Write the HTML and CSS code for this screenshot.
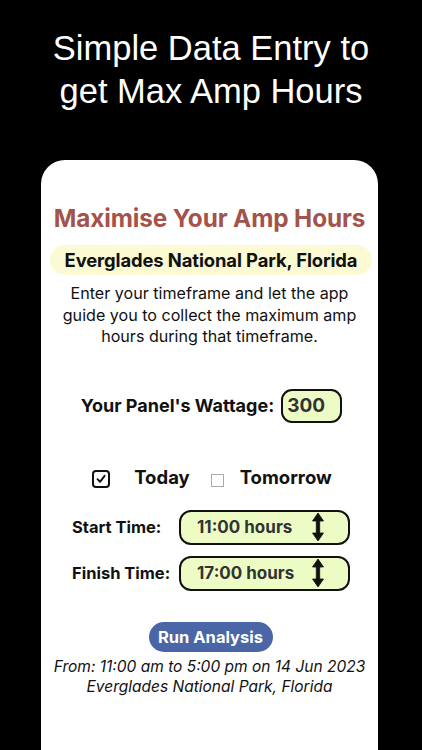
FILE: index.html
```html
<!DOCTYPE html>
<html lang="en">
<head>
<meta charset="utf-8">
<title>Maximise Your Amp Hours</title>
<link rel="stylesheet" href="styles.css">
</head>
<body>
<header class="promo">Simple Data Entry to<br>get Max Amp Hours</header>
<main class="card">
  <h1 class="title">Maximise Your Amp Hours</h1>
  <div class="location">Everglades National Park, Florida</div>
  <p class="intro">Enter your timeframe and let the app guide you to collect the maximum amp hours during that timeframe.</p>

  <div class="wattage">
    <span class="wattage-label">Your Panel's Wattage:</span>
    <span class="wattage-box">300</span>
  </div>

  <div class="days">
    <span class="check checked">
      <svg viewBox="0 0 12 12" width="12" height="12"><path d="M2.5 6.2 L5 8.8 L9.6 2.8" fill="none" stroke="#111" stroke-width="1.9" stroke-linecap="round" stroke-linejoin="round"/></svg>
    </span>
    <span class="day-label">Today</span>
    <span class="check unchecked"></span>
    <span class="day-label">Tomorrow</span>
  </div>

  <div class="times">
    <span class="time-label">Start Time:</span>
    <div class="time-box"><span class="time-value">11:00 hours</span>
      <svg class="updown" viewBox="0 0 12 30" width="12" height="30"><path d="M6 1 L11.5 9 L0.5 9 Z M4.3 8 H7.7 V22 H4.3 Z M0.5 21 L11.5 21 L6 29 Z" fill="#111" stroke="#111" stroke-width="0.8" stroke-linejoin="round"/></svg>
    </div>
    <span class="time-label">Finish Time:</span>
    <div class="time-box"><span class="time-value">17:00 hours</span>
      <svg class="updown" viewBox="0 0 12 30" width="12" height="30"><path d="M6 1 L11.5 9 L0.5 9 Z M4.3 8 H7.7 V22 H4.3 Z M0.5 21 L11.5 21 L6 29 Z" fill="#111" stroke="#111" stroke-width="0.8" stroke-linejoin="round"/></svg>
    </div>
  </div>

  <div class="actions"><button class="run">Run Analysis</button></div>
  <p class="summary">From: 11:00 am to 5:00 pm on 14 Jun 2023<br>Everglades National Park, Florida</p>
</main>
</body>
</html>
```

FILE: styles.css
```css
html, body {
  margin: 0;
  padding: 0;
  background: #000;
}
body {
  width: 422px;
  height: 750px;
  overflow: hidden;
  font-family: Inter, "Noto Sans", "Liberation Sans", sans-serif;
}
.promo {
  color: #fff;
  font-family: "Liberation Sans", Arial, sans-serif;
  font-size: 34.5px;
  line-height: 43px;
  text-align: center;
  padding-top: 27px;
}
.card {
  margin: 47px 0 0 41px;
  width: 337px;
  height: 600px;
  background: #fff;
  border-radius: 24px 24px 0 0;
  padding-top: 43px;
  box-sizing: border-box;
  color: #111;
}
.title {
  margin: 0;
  text-align: center;
  font-size: 24.3px;
  line-height: 30px;
  font-weight: 700;
  color: #a4534a;
  letter-spacing: -0.1px;
}
.location {
  margin: 12px 6px 0 9px;
  height: 30px;
  line-height: 30px;
  border-radius: 15px;
  background: #fbfad2;
  text-align: center;
  font-size: 18.4px;
  font-weight: 700;
  color: #111;
  letter-spacing: -0.1px;
}
.intro {
  margin: 8px 10px 0;
  text-align: center;
  font-size: 16.1px;
  line-height: 21.5px;
  color: #111;
}
.wattage {
  margin-top: 41px;
  display: flex;
  justify-content: center;
  align-items: center;
  gap: 7px;
  padding-left: 4px;
}
.wattage-label {
  font-size: 18px;
  font-weight: 700;
}
.wattage-box {
  width: 61px;
  height: 34px;
  box-sizing: border-box;
  border: 2px solid #111;
  border-radius: 11px;
  background: #edfcc5;
  font-size: 19px;
  font-weight: 700;
  color: #333;
  line-height: 30px;
  padding-left: 4px;
}
.days {
  margin-top: 42px;
  display: flex;
  justify-content: center;
  align-items: center;
  height: 24px;
  padding-left: 5px;
}
.check {
  box-sizing: border-box;
  display: inline-flex;
  align-items: center;
  justify-content: center;
}
.check.checked {
  width: 18px;
  height: 18px;
  border: 2px solid #111;
  border-radius: 4px;
  margin-top: 4px;
  margin-right: 24px;
}
.check.unchecked {
  width: 13px;
  height: 13px;
  border: 1px solid #aaa;
  margin-top: 8px;
  margin-left: 21px;
  margin-right: 16px;
}
.day-label {
  font-size: 18.5px;
  font-weight: 700;
}
.times {
  margin: 21px 0 0 31px;
  display: grid;
  grid-template-columns: 107px 171px;
  row-gap: 11px;
  align-items: center;
}
.time-label {
  font-size: 16.5px;
  font-weight: 700;
}
.time-box {
  height: 35px;
  box-sizing: border-box;
  border: 2px solid #111;
  border-radius: 12px;
  background: #edfcc5;
  display: flex;
  align-items: center;
  padding-left: 16px;
}
.time-value {
  font-size: 17px;
  font-weight: 700;
  color: #333;
  width: 115px;
}
.updown {
  display: block;
}
.actions {
  margin-top: 31px;
  display: flex;
  justify-content: center;
  padding-left: 2px;
}
.run {
  width: 124px;
  height: 30px;
  border: none;
  border-radius: 15px;
  background: #4a66a7;
  color: #fff;
  font-family: Inter, "Noto Sans", sans-serif;
  font-size: 16.5px;
  font-weight: 700;
  padding: 0;
}
.summary {
  margin: 5px 0 0;
  text-align: center;
  font-style: italic;
  font-size: 15.5px;
  line-height: 20px;
  color: #111;
}
```
